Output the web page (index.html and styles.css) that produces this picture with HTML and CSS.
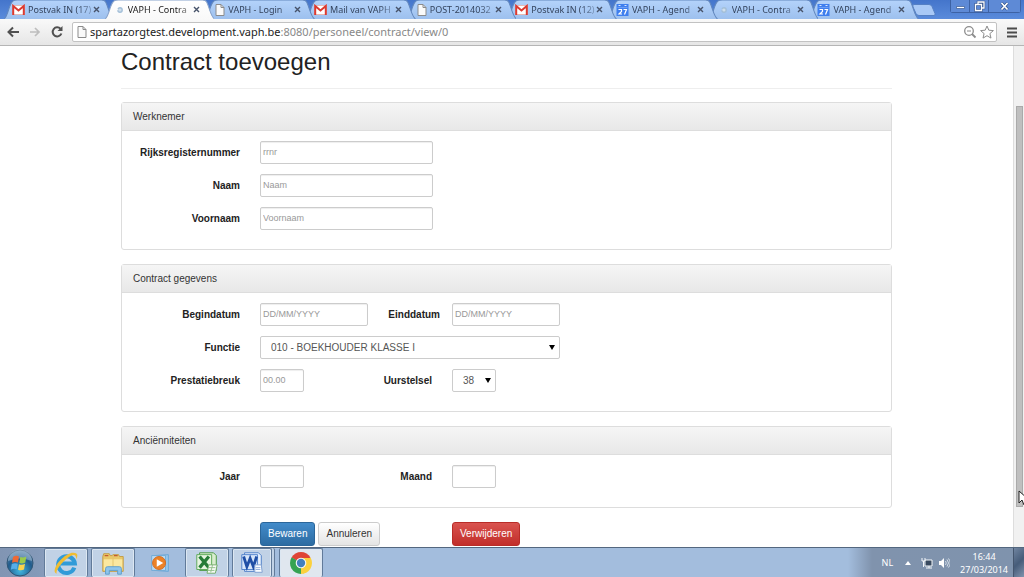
FILE: index.html
```html
<!DOCTYPE html>
<html lang="nl">
<head>
<meta charset="utf-8">
<title>VAPH - Contract</title>
<link rel="stylesheet" href="styles.css">
</head>
<body>
<svg class="defs" aria-hidden="true">
  <defs>
    <linearGradient id="tabfill" x1="0" y1="0" x2="0" y2="1"><stop offset="0" stop-color="#b4d3fb"/><stop offset="1" stop-color="#9dc0ee"/></linearGradient>
    <linearGradient id="whitefill" x1="0" y1="0" x2="0" y2="1"><stop offset="0" stop-color="#ffffff"/><stop offset="1" stop-color="#f9f9f9"/></linearGradient>
    <radialGradient id="orb" cx=".5" cy=".8" r=".8"><stop offset="0" stop-color="#41b6e0"/><stop offset=".6" stop-color="#215b8b"/><stop offset="1" stop-color="#6d93b5"/></radialGradient>
    <symbol id="shape" viewBox="0 0 109 19" preserveAspectRatio="none"><path d="M0 19C4 17 5 3 9 1Q10 0 13 0H97Q100 0 101 2C104 8 105 17 109 19"/></symbol>
    <symbol id="gmail" viewBox="0 0 13 11"><path d="M1 1h11v9H1z" fill="#fff" stroke="#e6b9b5"/><path d="M1.2 10.5V1.5L6.5 6l5.300-4.500v9" fill="none" stroke="#dc3a30" stroke-width="2"/></symbol>
    <symbol id="page" viewBox="0 0 10 12"><path d="M1 .5h5l3 3v8H1z" fill="#fafafa" stroke="#8b8b8b"/><path d="M6 .5v3h3" fill="none" stroke="#8b8b8b"/></symbol>
    <symbol id="cal" viewBox="0 0 12 12"><path d="M0 0h12v12H0z" fill="#3f7fee"/><path d="M2 1h2v1H2zM8 1h2v1H8z" fill="#dce8ff"/><path d="M1 3.500h10" stroke="#8eb4fa" stroke-width=".6"/><path d="M2 5.500h3v2L2.500 10H5.500M7 5.500h3L8 10.500" fill="none" stroke="#fff" stroke-width="1.200"/></symbol>
    <symbol id="ring" viewBox="0 0 10 10"><circle cx="5" cy="5" r="2.200" fill="#cfdfec" stroke="#a3bfd8" stroke-width="1.400" stroke-dasharray="6 1"/></symbol>
    <symbol id="x" viewBox="0 0 7 7"><path d="M1 1l5 5M6 1L1 6" fill="none" stroke="#47536a" stroke-width="1.400"/></symbol>
  </defs>
</svg>

<header class="browser">
  <div class="strip">
    <div class="tabs" role="tablist">
      <div class="tab"><svg class="shape"><use href="#shape"/></svg><svg class="fav wide"><use href="#gmail"/></svg><span class="title">Postvak IN (17)</span><button class="close" aria-label="Sluiten"><svg><use href="#x"/></svg></button></div>
      <div class="tab active"><svg class="shape"><use href="#shape"/></svg><svg class="fav"><use href="#ring"/></svg><span class="title">VAPH - Contra</span><button class="close" aria-label="Sluiten"><svg><use href="#x"/></svg></button></div>
      <div class="tab"><svg class="shape"><use href="#shape"/></svg><svg class="fav"><use href="#page"/></svg><span class="title">VAPH - Login</span><button class="close" aria-label="Sluiten"><svg><use href="#x"/></svg></button></div>
      <div class="tab"><svg class="shape"><use href="#shape"/></svg><svg class="fav wide"><use href="#gmail"/></svg><span class="title">Mail van VAPH</span><button class="close" aria-label="Sluiten"><svg><use href="#x"/></svg></button></div>
      <div class="tab"><svg class="shape"><use href="#shape"/></svg><svg class="fav"><use href="#page"/></svg><span class="title">POST-2014032</span><button class="close" aria-label="Sluiten"><svg><use href="#x"/></svg></button></div>
      <div class="tab"><svg class="shape"><use href="#shape"/></svg><svg class="fav wide"><use href="#gmail"/></svg><span class="title">Postvak IN (12)</span><button class="close" aria-label="Sluiten"><svg><use href="#x"/></svg></button></div>
      <div class="tab"><svg class="shape"><use href="#shape"/></svg><svg class="fav wide"><use href="#cal"/></svg><span class="title">VAPH - Agend</span><button class="close" aria-label="Sluiten"><svg><use href="#x"/></svg></button></div>
      <div class="tab"><svg class="shape"><use href="#shape"/></svg><svg class="fav"><use href="#ring"/></svg><span class="title">VAPH - Contra</span><button class="close" aria-label="Sluiten"><svg><use href="#x"/></svg></button></div>
      <div class="tab"><svg class="shape"><use href="#shape"/></svg><svg class="fav wide"><use href="#cal"/></svg><span class="title">VAPH - Agend</span><button class="close" aria-label="Sluiten"><svg><use href="#x"/></svg></button></div>
    </div>
    <button class="newtab" aria-label="Nieuw tabblad"><svg viewBox="0 0 24 12"><path d="M2 .5h15q2 0 3 2l3 7q.5 2-1 2H7q-2 0-3-2L1 3Q0 .5 2 .5z" fill="#a9c9f6" stroke="#5580c4"/></svg></button>
    <div class="controls">
      <button aria-label="Minimaliseren"><svg viewBox="0 0 19 13"><path d="M5.500 6.500h8v2h-8z" fill="#fff" stroke="#38598f" stroke-width=".7"/></svg></button>
      <button aria-label="Herstellen"><svg viewBox="0 0 19 13"><path d="M8 4V2h6v6h-2M5.500 4.500h6v6h-6z" fill="none" stroke="#304f86" stroke-width="2.400"/><path d="M8 4V2h6v6h-2M5.500 4.500h6v6h-6z" fill="none" stroke="#fff" stroke-width="1.300"/></svg></button>
      <button class="last" aria-label="Venster sluiten"><svg viewBox="0 0 19 13"><path d="M6.500 3l6 6.500M12.500 3l-6 6.500" stroke="#304f86" stroke-width="3"/><path d="M6.500 3l6 6.500M12.500 3l-6 6.500" stroke="#fff" stroke-width="1.700"/></svg></button>
    </div>
  </div>
  <div class="toolbar">
    <button class="tool" aria-label="Terug"><svg viewBox="0 0 14 12"><path d="M13 6H3M7 1.500L2.500 6 7 10.500" fill="none" stroke="#505050" stroke-width="2"/></svg></button>
    <button class="tool" aria-label="Vooruit"><svg viewBox="0 0 14 12"><path d="M2 6h9M7 2l4 4-4 4" fill="none" stroke="#bdbdbd" stroke-width="1.700"/></svg></button>
    <button class="tool" aria-label="Vernieuwen"><svg viewBox="0 0 14 12"><path d="M10.500 2.800A4.500 4.500 0 1 0 11.400 7.500" fill="none" stroke="#505050" stroke-width="2"/><path d="M12.500 0v5h-5z" fill="#505050"/></svg></button>
    <div class="address">
      <svg class="fav"><use href="#page"/></svg>
      <span class="url">spartazorgtest.development.vaph.be<span class="path">:8080/personeel/contract/view/0</span></span>
      <svg class="glyph" viewBox="0 0 14 14"><circle cx="6" cy="6" r="4.300" fill="none" stroke="#8c8c8c" stroke-width="1.300"/><path d="M4 6h4" stroke="#8c8c8c"/><path d="M9 9l3.500 3.500" stroke="#8c8c8c" stroke-width="1.800"/></svg>
      <svg class="glyph" viewBox="0 0 14 14"><path d="M7 1l1.800 4.200 4.600.4-3.500 3 1.100 4.500L7 10.700l-4 2.400 1.100-4.500-3.500-3 4.600-.4z" fill="#fff" stroke="#8c8c8c"/></svg>
    </div>
    <button class="menu" aria-label="Menu"><svg viewBox="0 0 10 11"><path d="M0 1.500h10M0 5.500h10M0 9.500h10" stroke="#4b4b4b" stroke-width="2"/></svg></button>
  </div>
</header>

<div class="viewport">
  <main class="content">
    <form class="container">
      <h1>Contract toevoegen</h1>
      <section class="panel">
        <h2>Werknemer</h2>
        <div class="body">
          <div class="row"><label for="rrnr">Rijksregisternummer</label><input class="long" id="rrnr" placeholder="rrnr"></div>
          <div class="row"><label for="naam">Naam</label><input class="long" id="naam" placeholder="Naam"></div>
          <div class="row"><label for="voornaam">Voornaam</label><input class="long" id="voornaam" placeholder="Voornaam"></div>
        </div>
      </section>
      <section class="panel">
        <h2>Contract gegevens</h2>
        <div class="body">
          <div class="row"><label for="begin">Begindatum</label><div class="slot"><input class="date" id="begin" placeholder="DD/MM/YYYY"></div><label class="second near" for="eind">Einddatum</label><input class="date" id="eind" placeholder="DD/MM/YYYY"></div>
          <div class="row"><label for="functie">Functie</label><div class="pick full"><select id="functie"><option>010 - BOEKHOUDER KLASSE I</option></select></div></div>
          <div class="row"><label for="breuk">Prestatiebreuk</label><div class="slot"><input class="short" id="breuk" placeholder="00.00"></div><label class="second" for="uur">Uurstelsel</label><div class="pick short"><select id="uur"><option>38</option></select></div></div>
        </div>
      </section>
      <section class="panel">
        <h2>Anciënniteiten</h2>
        <div class="body">
          <div class="row"><label for="jaar">Jaar</label><div class="slot"><input class="short" id="jaar"></div><label class="second" for="maand">Maand</label><input class="short" id="maand"></div>
        </div>
      </section>
      <div class="actions">
        <div class="pair"><button type="button" class="btn primary">Bewaren</button><button type="button" class="btn">Annuleren</button></div>
        <button type="button" class="btn danger">Verwijderen</button>
      </div>
    </form>
  </main>
  <div class="scroll"><div class="thumb"></div></div>
  <svg class="cursor" viewBox="0 0 10 16"><path d="M1 1v12l3-3 2 5 2.500-1L6.500 9H10L1 1z" fill="#fff" stroke="#222"/></svg>
</div>

<footer class="taskbar">
  <button class="start" aria-label="Start"><svg viewBox="0 0 28 28"><circle cx="14" cy="14" r="13" fill="url(#orb)" stroke="#315675"/><path d="M2 12a12 12 0 0 1 24 0q-12-5-24 0z" fill="#c9dae8" opacity=".4"/><path d="M7 8q3-2 6-.5l-1 6q-3-1.200-6 .3z" fill="#ee6a35"/><path d="M14.300 8q3 1.200 6-.5l-1 6q-3 1.700-6 .5z" fill="#9bcb4a"/><path d="M5.800 15q3-1.500 6-.2l-1 5.500q-3-1.200-6 .4z" fill="#58aee8"/><path d="M13 15.200q3 1.200 6-.4l-1 5.700q-3 1.500-6 .2z" fill="#fbd34c"/></svg></button>
  <button class="app" aria-label="Internet Explorer"><svg viewBox="0 0 28 26"><path d="M23 18A9 9 0 1 1 23.500 13.500H8" fill="none" stroke="#319bd8" stroke-width="4.400"/><path d="M4 24.500C-3 23 7 6 20 2q9-1 5 7 0-6-5-4C12 9 2 21 4 24.500z" fill="#f0bd32"/></svg></button>
  <button class="app" aria-label="Verkenner"><svg viewBox="0 0 28 26"><path d="M3 6l1-3h6l1 2h2l1-1h6l1 2h4v16H3z" fill="#e9c869" stroke="#c39c43"/><path d="M5 5h4M15 5h4" stroke="#c45b31" stroke-width="1.500"/><path d="M4 9h20v12H4z" fill="#fbe8a0"/><path d="M14 5v17" stroke="#e3c36a"/><path d="M6 25v-6q0-2 2-2h13q2 0 2 2v6h-4v-4h-9v4z" fill="#8fc5ec" stroke="#5c9dcc"/></svg></button>
  <button class="app plain" aria-label="Media Player"><svg viewBox="0 0 28 26"><path d="M8 5l15-1v18l-15-1z" fill="#9bc8eb" stroke="#67a5d6"/><path d="M5 5h15v16H5z" fill="#b9dbf4" stroke="#6fa9d5"/><circle cx="13" cy="13" r="7" fill="#ec8226" stroke="#d2691e"/><path d="M10.500 9l7 4-7 4z" fill="#fff"/></svg></button>
  <button class="app" aria-label="Excel"><svg viewBox="0 0 28 26"><path d="M6 2h15l3 3v16H6z" fill="#d9edcf" stroke="#44963f"/><path d="M3 4h16v16H3z" fill="#e6f4df" stroke="#58a653"/><path d="M6 6l10 12M16 6L6 18" stroke="#267c37" stroke-width="3.500"/><path d="M16 15h9l-2 9h-9z" fill="#f8fbf6" stroke="#70ab68"/><path d="M16 18h7M15 21h7M20 15l-2 8" stroke="#91bd8a"/></svg></button>
  <button class="app stack" aria-label="Word"><svg viewBox="0 0 28 26"><path d="M6 2h15l3 3v17H6z" fill="#e8f1fd" stroke="#4a7cc6"/><path d="M3 4h17v16H3z" fill="#d7e6fa" stroke="#4c7fca"/><path d="M5 6l3.500 11 3.500-9 3.500 9L19 6" fill="none" stroke="#1f4fa6" stroke-width="3"/><path d="M17 15h7l1 8h-8z" fill="#fafdff" stroke="#7e9fd1"/><path d="M18 18h5M18 20h5" stroke="#91aedb"/></svg></button>
  <button class="app bright" aria-label="Chrome"><svg viewBox="0 0 26 26"><path d="M13 13L3.500 7.500A11 11 0 0 1 22.500 7.500z" fill="#df4536"/><path d="M13 13l9.500-5.500A11 11 0 0 1 13 24z" fill="#fbd13d"/><path d="M13 13v11A11 11 0 0 1 3.500 7.500z" fill="#35a352"/><path d="M3.500 7.500l5.500 8 4 3 1-5z" fill="#35a352"/><path d="M13 8h9.700q2.500 8-4 14l-4 2 4-9z" fill="#fbd13d"/><circle cx="13" cy="13" r="5.300" fill="#f5f7f8"/><circle cx="13" cy="13" r="4.200" fill="#4380bd"/></svg></button>
  <div class="tray">
    <span class="lang">NL</span>
    <svg class="up" viewBox="0 0 6 4"><path d="M0 4l3-4 3 4z" fill="#fff"/></svg>
    <svg class="net" viewBox="0 0 12 12"><path d="M4 3h7v6H4zM5 11h6M8 9v2" fill="#394a5f" stroke="#f4f7fa"/><path d="M1 1v3h3V1M2.500 4v6" fill="none" stroke="#f4f7fa"/></svg>
    <svg class="net" viewBox="0 0 12 12"><path d="M1 4h2l3-3v10L3 8H1z" fill="#fff"/><path d="M7.500 4q1.500 2 0 4M9 2.500q3 3.500 0 7M10.500 1.500q3.500 4.500 0 9" fill="none" stroke="#eaf1f7" stroke-width=".8"/></svg>
    <div class="clock"><time>16:44</time><span>27/03/2014</span></div>
    <div class="desktop"></div>
  </div>
</footer>
</body>
</html>
```

FILE: styles.css
```css
* { box-sizing: border-box; }
body {
  margin: 0;
  height: 100vh;
  display: flex;
  flex-direction: column;
  overflow: hidden;
  background: #fff;
  color: #333;
  font: 10px/14px "Liberation Sans", Arial, sans-serif;
}
button, input, select { font: inherit; color: inherit; margin: 0; }
button { padding: 0; border: 0; background: none; }
svg { display: block; flex: none; }
.defs { position: absolute; width: 0; height: 0; }

/* Browser frame */
.browser { flex: none; font-family: "Noto Sans", sans-serif; }
.strip {
  display: flex;
  height: 19px;
  padding-left: 4px;
  background: linear-gradient(#4475cb, #5a8bdb);
}
.tabs { display: flex; flex: 1; min-width: 0; }
.tab {
  position: relative;
  display: flex;
  flex: 1;
  align-items: center;
  min-width: 0;
  padding: 0 5px 0 8px;
  font-size: 9px;
  line-height: 19px;
  color: #34445e;
}
.tab:nth-child(1) { z-index: 8; }
.tab:nth-child(3) { z-index: 7; }
.tab:nth-child(4) { z-index: 6; }
.tab:nth-child(5) { z-index: 5; }
.tab:nth-child(6) { z-index: 4; }
.tab:nth-child(7) { z-index: 3; }
.tab:nth-child(8) { z-index: 2; }
.tab:nth-child(9) { z-index: 1; }
.tab.active { z-index: 9; color: #222; }
.shape {
  position: absolute;
  left: 0;
  top: 0;
  width: 109%;
  height: 19px;
  fill: url(#tabfill);
  stroke: #6287bd;
}
.active .shape { fill: url(#whitefill); stroke: #88a3cb; }
.fav { position: relative; width: 10px; height: 12px; margin: 0 3px 0 2px; }
.fav.wide { width: 13px; margin: 0 3px 0 0; }
.title {
  position: relative;
  flex: 1;
  min-width: 0;
  overflow: hidden;
  white-space: nowrap;
  -webkit-mask-image: linear-gradient(90deg, #000 75%, rgba(0, 0, 0, .3));
  mask-image: linear-gradient(90deg, #000 75%, rgba(0, 0, 0, .3));
}
.close { position: relative; }
.close svg { width: 7px; height: 7px; }
.newtab { width: 24px; margin: 0 14px 0 2px; }
.newtab svg { width: 24px; height: 12px; }
.controls { display: flex; height: 13px; margin-right: 3px; border: 1px solid #3d62a4; border-top: 0; border-radius: 0 0 3px 3px; }
.controls button { width: 19px; border-right: 1px solid #3d62a4; background: #5e8ad6; }
.controls .last { width: 31px; border-right: 0; }
.controls svg { height: 13px; margin: auto; }
.toolbar {
  display: flex;
  align-items: center;
  height: 27px;
  padding: 0 7px 0 6px;
  background: linear-gradient(#f9f9f9, #e6e6e6);
  border-bottom: 1px solid #b5b5b5;
}
.tool { margin-right: 8px; }
.tool svg { width: 14px; height: 12px; }
.address {
  display: flex;
  flex: 1;
  align-items: center;
  height: 20px;
  min-width: 0;
  padding: 0 2px;
  background: #fff;
  border: 1px solid #c2c2c2;
  border-radius: 2px;
}
.url { flex: 1; font-size: 11px; line-height: 16px; color: #222; white-space: nowrap; overflow: hidden; }
.path { color: #888; }
.glyph { width: 14px; height: 14px; margin-left: 3px; }
.menu { margin-left: 10px; }
.menu svg { width: 10px; height: 11px; }

/* Page */
.viewport { position: relative; display: flex; flex: 1; min-height: 0; }
.content { flex: 1; min-width: 0; overflow: hidden; }
.container { max-width: 771px; margin: 0 auto; }
h1 {
  margin: 0 0 13px;
  padding: 2px 0 12px;
  border-bottom: 1px solid #eee;
  font-size: 24px;
  font-weight: 400;
  line-height: 28px;
  color: #222;
}
.panel { margin-bottom: 14px; border: 1px solid #ddd; border-radius: 3px; }
h2 {
  margin: 0;
  padding: 7px 11px 6px;
  border-bottom: 1px solid #ddd;
  background: linear-gradient(#f5f5f5, #e8e8e8);
  font-size: 10px;
  font-weight: 400;
  line-height: 14px;
}
.body { display: flex; flex-direction: column; gap: 10px; padding: 10px 0 19px; }
.row { display: flex; align-items: center; }
.row label { width: 118px; margin-right: 20px; text-align: right; font-weight: 700; color: #222; }
.row .second { width: 64px; }
.row .near { width: 72px; margin-right: 12px; }
.slot { width: 108px; }
input, select {
  display: block;
  width: 100%;
  height: 23px;
  padding: 0 2px;
  background: #fff;
  border: 1px solid #ccc;
  border-radius: 2px;
  color: #555;
}
input { padding-bottom: 1px; box-shadow: inset 0 1px 1px #eee; font-size: 9px; }
input::placeholder { color: #999; opacity: 1; }
.long { width: 173px; }
.date { width: 108px; }
.short { width: 44px; }
.full { width: 300px; }
.pick { position: relative; }
.pick select { padding: 0 10px; appearance: none; }
.pick::after {
  content: "";
  position: absolute;
  right: 5px;
  top: 9px;
  border: 3px solid transparent;
  border-top: 5px solid #000;
  border-bottom: 0;
  pointer-events: none;
}
.actions { display: flex; padding-left: 139px; }
.pair { display: flex; gap: 3px; width: 192px; }
.btn {
  height: 24px;
  padding: 0 7px;
  border: 1px solid #ccc;
  border-radius: 3px;
  background: linear-gradient(#fff, #e4e4e4);
}
.primary { border-color: #2b669a; background: linear-gradient(#428bca, #2d6ca2); color: #fff; }
.danger { border-color: #b92c28; background: linear-gradient(#d9534f, #c12e2a); color: #fff; }
.scroll { width: 11px; padding: 0 1px 0 2px; background: #f1f1f1; border-left: 1px solid #ddd; }
.thumb { height: 80%; margin-top: 60px; background: #bfbfbf; border: 1px solid #aaa; }
.cursor { position: absolute; right: -4px; bottom: 41px; width: 10px; height: 16px; }

/* Taskbar */
.taskbar {
  display: flex;
  flex: none;
  height: 30px;
  border-top: 1px solid #53677f;
  background: linear-gradient(90deg, #8195b3, #8499b8 36px, #a3bddd 140px);
  font-family: "Noto Sans", sans-serif;
}
.start { width: 40px; margin-right: 4px; }
.start svg { width: 28px; height: 28px; margin: auto; }
.app { width: 44px; margin-right: 3px; border: 1px solid #617a99; border-bottom: 0; border-radius: 2px; background: #c1d2e6; box-shadow: inset 0 0 0 1px #dce7f2; }
.app svg { width: 26px; height: 26px; margin: auto; }
.plain { border-color: transparent; background: none; box-shadow: none; }
.stack { width: 40px; margin-right: 7px; box-shadow: inset 0 0 0 1px #dce7f2, 2px 0 #c1d2e6, 3px 0 #617a99; }
.bright { background: #e0e7ef; }
.tray {
  display: flex;
  align-items: center;
  margin-left: auto;
  padding-left: 34px;
  background: linear-gradient(90deg, #a3bddd, #8093ad 24px, #7f93ad);
  color: #fff;
  font-size: 9px;
}
.lang { margin-right: 12px; }
.up { width: 6px; height: 4px; margin-right: 10px; }
.net { width: 12px; height: 12px; margin-right: 5px; }
.clock { display: flex; flex-direction: column; align-items: center; margin: 0 5px; line-height: 13px; }
.desktop { align-self: stretch; width: 11px; border-left: 1px solid #45566e; background: linear-gradient(135deg, #7084a0, #465c79 50%, #8093ad); }
```
